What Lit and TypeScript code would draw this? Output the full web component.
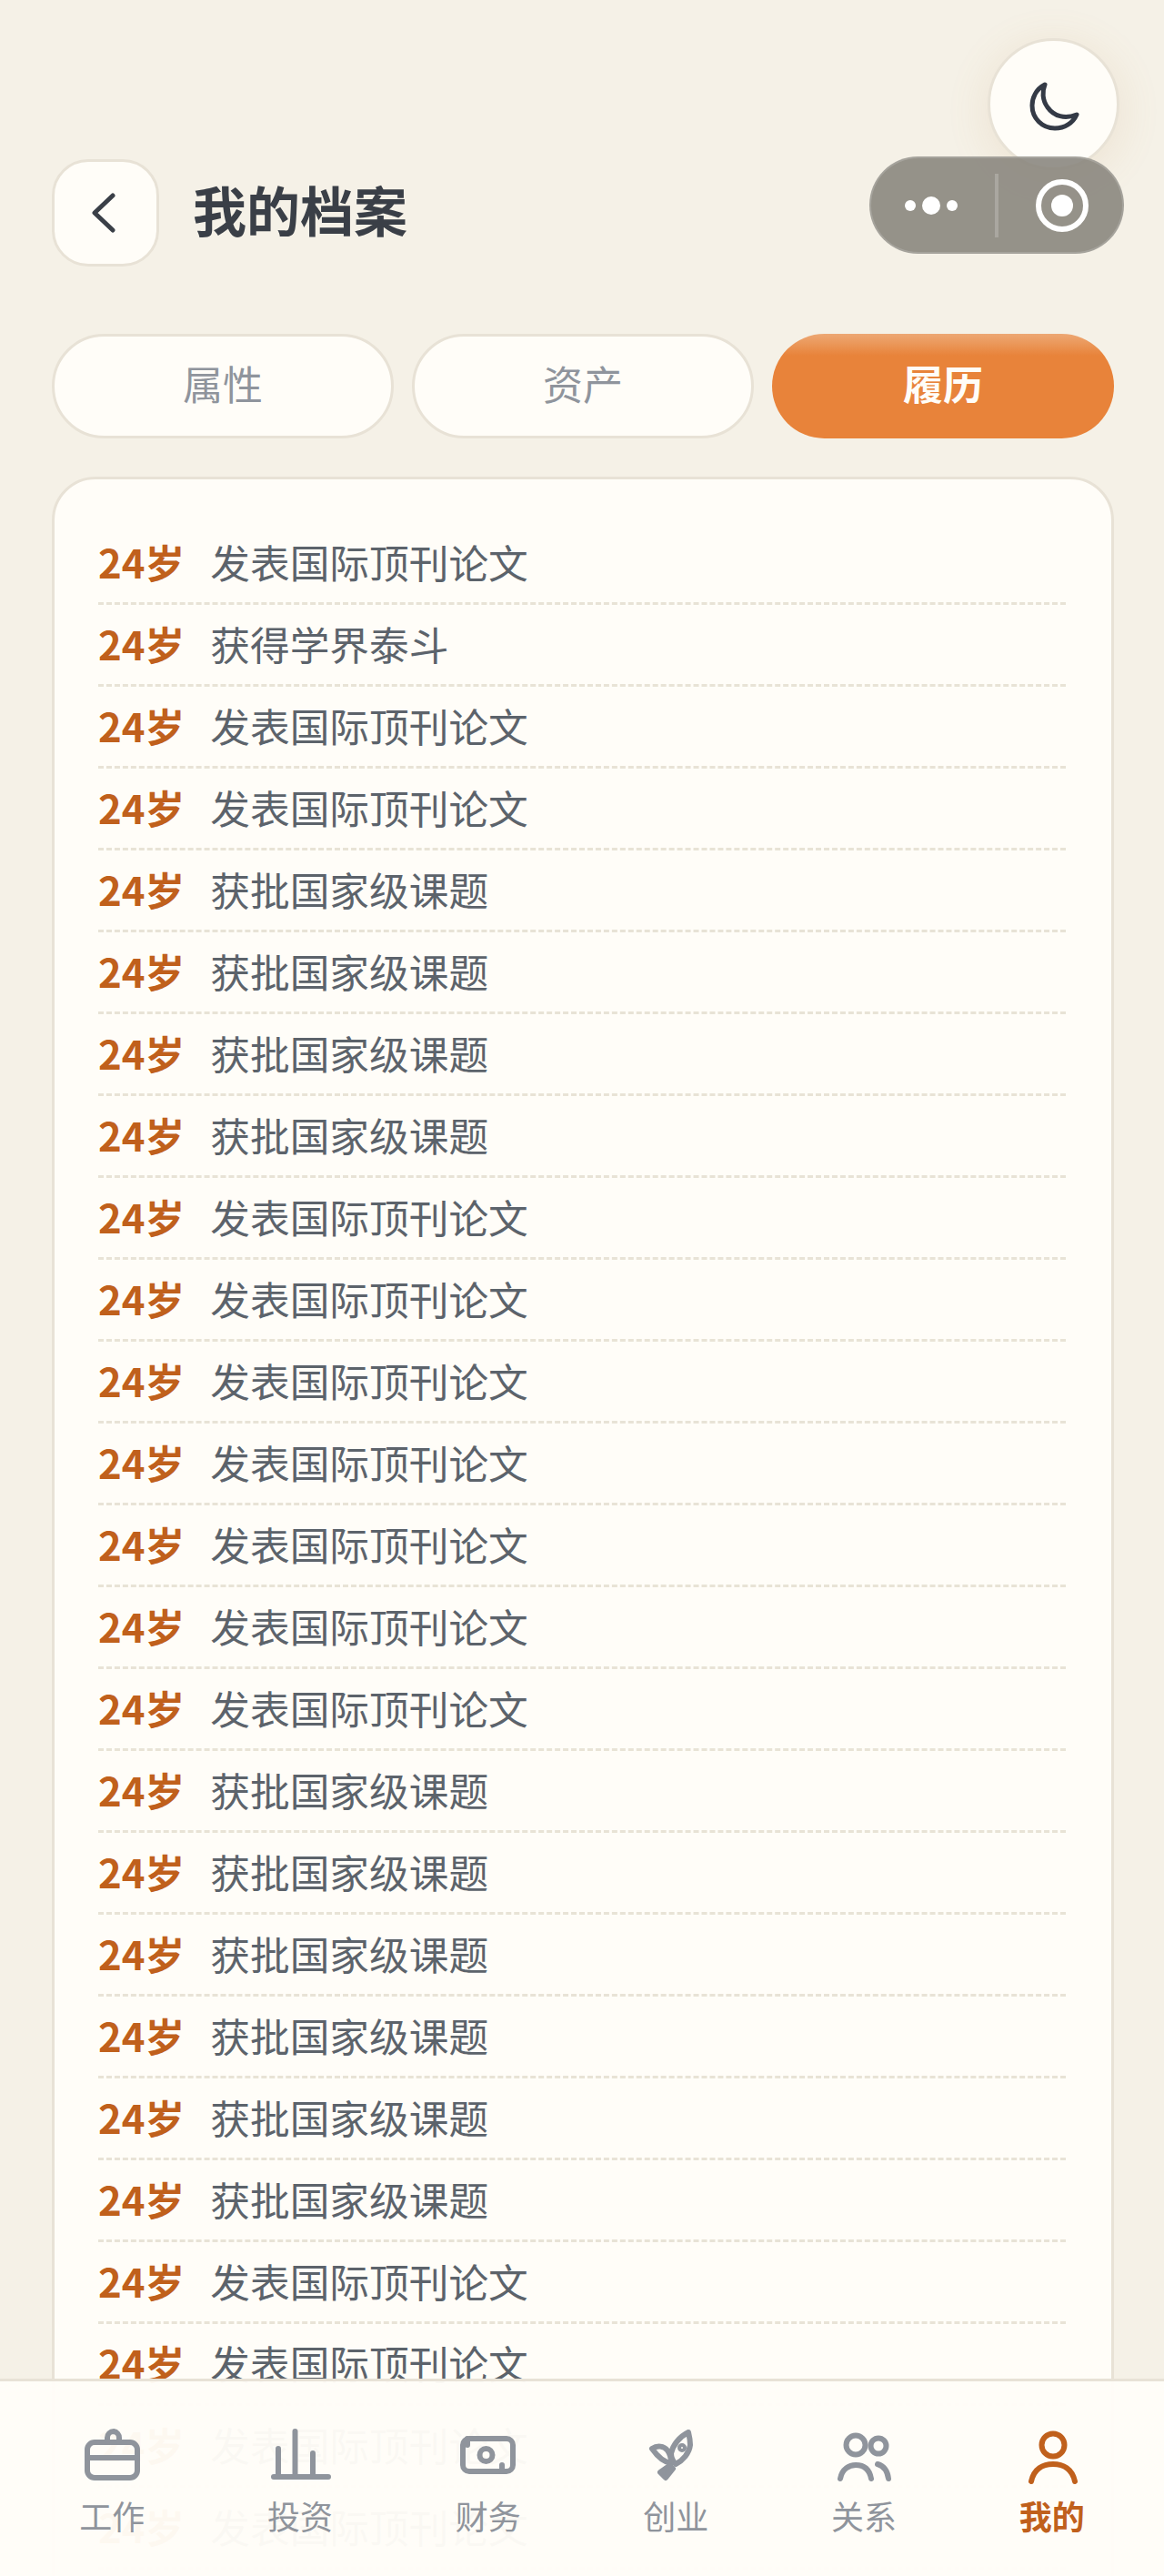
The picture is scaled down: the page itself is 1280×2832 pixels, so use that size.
import { LitElement, html, css, svg } from 'lit';
import { customElement } from 'lit/decorators.js';

const PAPER = '发表国际顶刊论文';
const GRANT = '获批国家级课题';
const PEAK = '获得学界泰斗';

const ROWS = [
  PAPER, PEAK, PAPER, PAPER,
  GRANT, GRANT, GRANT, GRANT,
  PAPER, PAPER, PAPER, PAPER, PAPER, PAPER, PAPER,
  GRANT, GRANT, GRANT, GRANT, GRANT, GRANT,
  PAPER, PAPER, PAPER, PAPER,
];

const NAV = [
  {
    label: '工作',
    icon: svg`<rect x="9" y="21" width="55" height="39" rx="8"/><path d="M31 21v-5a7 7 0 0 1 7-7a7 7 0 0 1 6 7v5M9 38h55"/>`,
  },
  {
    label: '投资',
    icon: svg`<path d="M7 59h60M30.500 9v50M12 28v31M50 33v26"/>`,
  },
  {
    label: '财务',
    icon: svg`<rect x="8" y="17" width="55" height="36" rx="7"/><circle cx="33.500" cy="35" r="7"/><path d="M13 17v7M51 46v7"/>`,
  },
  {
    label: '创业',
    icon: svg`<path d="M50 10C40 15 33 24 31 33C31 38 33 42 36 45C44 41 51 33 52 24C52 18 51 14 50 10Z"/><path d="M10 28C16 24 23 25 27 30C30 34 31 39 31 44C24 43 17 38 10 28Z"/><path d="M29 47L19 54L25 60L33 50Z" fill="currentColor"/><circle cx="43" cy="27" r="2"/>`,
  },
  {
    label: '关系',
    icon: svg`<circle cx="27" cy="24" r="10.500"/><circle cx="52" cy="25" r="8.500"/><path d="M10 61C12 50 20 46 27 46C35 46 42 50 44 61M51 45C58 47 62 53 63 61"/>`,
  },
  {
    label: '我的',
    active: true,
    icon: svg`<circle cx="37" cy="24" r="12.500"/><path d="M13 64C16 50 26 45 37 45C48 45 58 50 61 64"/>`,
  },
];

const TABS = ['属性', '资产', '履历'];

@customElement('app-root')
export class AppRoot extends LitElement {
  static styles = css`
    :host {
      display: block;
      position: relative;
      height: 2832px;
      overflow: hidden;
      background: #f5f1e7;
      font-family: 'Noto Sans CJK SC', 'Noto Sans', sans-serif;
    }

    .header {
      display: flex;
      align-items: center;
      gap: 37px;
      padding: 175px 57px 0;
    }

    .back {
      width: 118px;
      height: 118px;
      box-sizing: border-box;
      display: flex;
      align-items: center;
      justify-content: center;
      background: #fffdf8;
      border: 3px solid #e8e2d6;
      border-radius: 40px;
    }

    .back svg {
      fill: none;
      stroke: #3a3f47;
      stroke-width: 5;
      stroke-linecap: round;
      stroke-linejoin: round;
    }

    .title {
      font-size: 59px;
      font-weight: 700;
      line-height: 110px;
      margin-bottom: 8px;
      color: #3a3f47;
    }

    .theme {
      position: absolute;
      left: 1086px;
      top: 42px;
      width: 145px;
      height: 145px;
      box-sizing: border-box;
      display: flex;
      align-items: center;
      justify-content: center;
      background: #fffdf8;
      border: 3px solid #e8e2d6;
      border-radius: 50%;
      box-shadow: 0 8px 48px rgba(190, 140, 80, 0.14);
    }

    .theme svg {
      fill: none;
      stroke: #343a46;
      stroke-width: 5;
      stroke-linejoin: round;
    }

    .capsule {
      position: absolute;
      left: 956px;
      top: 172px;
      width: 280px;
      height: 107px;
      box-sizing: border-box;
      background: rgba(135, 132, 124, 0.88);
      border: 2px solid rgba(255, 255, 255, 0.16);
      border-radius: 54px;
    }

    .capsule svg {
      display: block;
      margin: -2px;
    }

    .tabs {
      display: grid;
      grid-template-columns: repeat(3, 1fr);
      gap: 20px;
      padding: 74px 55px 0 57px;
    }

    .tab {
      height: 115px;
      box-sizing: border-box;
      display: flex;
      align-items: center;
      justify-content: center;
      padding-bottom: 7px;
      font-size: 44px;
      color: #8f949c;
      background: #fffdf8;
      border: 3px solid #e8e2d6;
      border-radius: 58px;
    }

    .tab.active {
      color: #fffdf8;
      font-weight: 700;
      border: none;
      padding-bottom: 7px;
      background: linear-gradient(180deg, #eda874 0, #e8833a 24px);
    }

    .card {
      margin: 42px 55px 0 57px;
      padding: 48px 50px 48px 48px;
      background: #fffdf8;
      border: 3px solid #e8e2d6;
      border-radius: 48px;
    }

    .row {
      display: flex;
      align-items: center;
      gap: 28px;
      height: 90px;
      box-sizing: border-box;
      padding-bottom: 4px;
      border-bottom: 3px dashed #e8e3d6;
      font-size: 43.700px;
      color: #5c636b;
    }

    .age {
      font-weight: 700;
      color: #c0601c;
    }

    .nav {
      position: absolute;
      left: 0;
      right: 0;
      bottom: 0;
      height: 217px;
      box-sizing: border-box;
      display: flex;
      padding: 46px 20px 0;
      background: rgba(255, 253, 248, 0.97);
      border-top: 3px solid #e8e2d6;
    }

    .item {
      flex: 1;
      display: flex;
      flex-direction: column;
      align-items: center;
      gap: 7px;
      font-size: 36px;
      line-height: 44px;
      color: #8f949c;
    }

    .item svg {
      display: block;
      fill: none;
      stroke: currentColor;
      stroke-width: 6;
      stroke-linecap: round;
      stroke-linejoin: round;
    }

    .item.active {
      color: #c0601c;
      font-weight: 700;
    }
  `;

  render() {
    return html`
      <div class="header">
        <div class="back">
          <svg width="40" height="60" viewBox="0 0 40 60"><path d="M28 11L8 30L28 49"/></svg>
        </div>
        <div class="title">我的档案</div>
      </div>

      <div class="tabs">
        ${TABS.map((t, i) => html`<div class="tab ${i === 2 ? 'active' : ''}">${t}</div>`)}
      </div>

      <div class="card">
        ${ROWS.map(r => html`<div class="row"><span class="age">24岁</span><span>${r}</span></div>`)}
      </div>

      <div class="theme">
        <svg width="60" height="60" viewBox="0 0 60 60">
          <path d="M20 8C10 13 6 23 6 31C6 45 17 56 31 56C42 56 51 50 55 41C42 46 30 43 23 33C17 25 17 15 20 8Z"/>
        </svg>
      </div>

      <div class="capsule">
        <svg width="280" height="107" viewBox="0 0 280 107">
          <circle cx="45" cy="54" r="6" fill="#fff"/>
          <circle cx="68" cy="54" r="10" fill="#fff"/>
          <circle cx="91" cy="54" r="6" fill="#fff"/>
          <rect x="138" y="19" width="4" height="70" fill="#fff" fill-opacity="0.2"/>
          <circle cx="212" cy="54" r="26" fill="none" stroke="#fff" stroke-width="6"/>
          <circle cx="212" cy="54" r="12" fill="#fff"/>
        </svg>
      </div>

      <div class="nav">
        ${NAV.map(n => html`
          <div class="item ${n.active ? 'active' : ''}">
            <svg width="72" height="72" viewBox="0 0 72 72">${n.icon}</svg>
            <span>${n.label}</span>
          </div>
        `)}
      </div>
    `;
  }
}
